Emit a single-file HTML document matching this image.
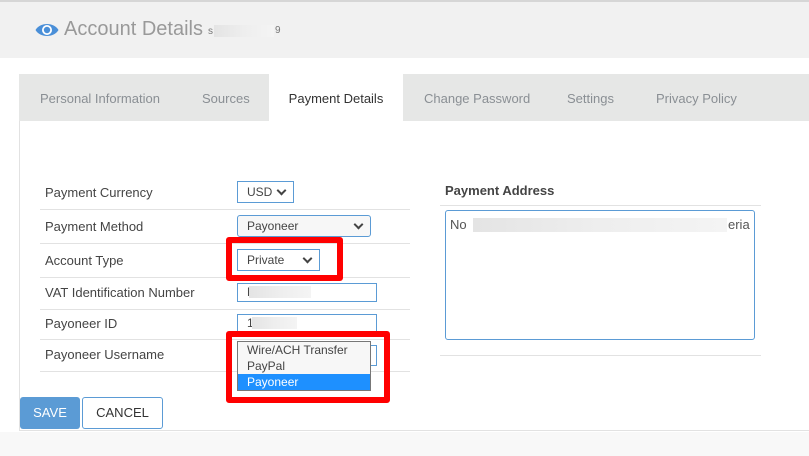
<!DOCTYPE html>
<html><head><meta charset="utf-8"><style>
*{margin:0;padding:0;box-sizing:border-box}
body{width:809px;height:456px;overflow:hidden;background:#fff;font-family:"Liberation Sans",sans-serif;position:relative;color:#333}
.a{position:absolute}
.hdr{left:0;top:0;width:809px;height:58px;background:#f1f1f1;border-top:2px solid #d6d6d6}
.tabs{left:19px;top:74px;width:790px;height:47px;background:#e6e7e6}
.tab{position:absolute;top:0;height:47px;line-height:50px;font-size:13px;color:#8a8f94}
.lbl{font-size:13px;color:#444;left:45px}
.ln{height:1px;background:#e2e2e2}
.sel{border:1px solid #5b9bd5;background:#fff;font-size:12px;color:#444;padding-left:9px;line-height:20px;height:22px}
.chev{position:absolute;right:8px;top:5px;width:7px;height:7px;border-right:2px solid #444;border-bottom:2px solid #444;transform:rotate(45deg)}
.blur{background:linear-gradient(90deg,#e4e4e4,#eee,#f4f4f4);}
.red{border:6px solid #f00;border-radius:3px}
</style></head><body>
<div class="a hdr"></div>
<svg class="a" style="left:35px;top:21px" width="24" height="18" viewBox="0 0 24 18"><path d="M0.5 9C5 1 19 1 23.5 9C19 17 5 17 0.5 9Z" fill="#4a8fd8"/><circle cx="12" cy="9" r="5" fill="#fff"/><circle cx="12" cy="9" r="3.2" fill="#4a8fd8"/></svg>
<div class="a" style="left:64px;top:18px;font-size:20px;color:#999">Account Details</div>
<div class="a" style="left:208px;top:26px;font-size:10px;color:#777">s</div>
<div class="a blur" style="left:214px;top:25px;width:60px;height:12px"></div>
<div class="a" style="left:275px;top:25px;font-size:10px;color:#777">9</div>

<div class="a tabs">
<div class="tab" style="left:21px">Personal Information</div>
<div class="tab" style="left:183px">Sources</div>
<div class="tab" style="left:250px;width:134px;background:#fff;color:#333;text-align:center">Payment Details</div>
<div class="tab" style="left:405px">Change Password</div>
<div class="tab" style="left:548px">Settings</div>
<div class="tab" style="left:637px">Privacy Policy</div>
</div>
<div class="a" style="left:19px;top:121px;width:1px;height:310px;background:#e2e2e2"></div>
<div class="a" style="left:19px;top:430px;width:790px;height:1px;background:#e2e2e2"></div>
<div class="a" style="left:0;top:432px;width:809px;height:24px;background:#f8f8f8"></div>

<div class="a lbl" style="top:185px">Payment Currency</div>
<div class="a lbl" style="top:219px">Payment Method</div>
<div class="a lbl" style="top:253px">Account Type</div>
<div class="a lbl" style="top:285px">VAT Identification Number</div>
<div class="a lbl" style="top:316px">Payoneer ID</div>
<div class="a lbl" style="top:347px">Payoneer Username</div>
<div class="a ln" style="left:40px;top:209px;width:370px"></div>
<div class="a ln" style="left:40px;top:243px;width:370px"></div>
<div class="a ln" style="left:40px;top:277px;width:370px"></div>
<div class="a ln" style="left:40px;top:309px;width:370px"></div>
<div class="a ln" style="left:40px;top:339px;width:370px"></div>
<div class="a ln" style="left:40px;top:371px;width:370px"></div>

<div class="a sel" style="left:237px;top:181px;width:57px">USD<span class="chev"></span></div>
<div class="a sel" style="left:237px;top:215px;width:134px;border-radius:3px;background:#f7f7f7">Payoneer<span class="chev"></span></div>
<div class="a sel" style="left:237px;top:249px;width:83px">Private<span class="chev"></span></div>
<div class="a sel" style="left:237px;top:283px;width:140px;height:19px;line-height:17px">N</div>
<div class="a blur" style="left:249px;top:286px;width:62px;height:12px"></div>
<div class="a sel" style="left:237px;top:314px;width:140px;height:19px;line-height:17px">1</div>
<div class="a blur" style="left:252px;top:317px;width:45px;height:12px"></div>
<div class="a sel" style="left:237px;top:345px;width:140px;height:21px"></div>

<div class="a red" style="left:226px;top:237px;width:117px;height:44px"></div>
<div class="a red" style="left:226px;top:331px;width:164px;height:72px"></div>
<div class="a" style="left:237px;top:341px;width:134px;height:50px;border:1px solid #777;background:#f7f7f7;font-size:12px;color:#444">
<div style="height:16px;line-height:16px;padding-left:9px">Wire/ACH Transfer</div>
<div style="height:16px;line-height:16px;padding-left:9px">PayPal</div>
<div style="height:16px;line-height:16px;padding-left:9px;background:#1e90ff;color:#fff">Payoneer</div>
</div>

<div class="a" style="left:445px;top:183px;font-size:13px;font-weight:bold;color:#444">Payment Address</div>
<div class="a ln" style="left:440px;top:205px;width:321px"></div>
<div class="a" style="left:445px;top:210px;width:310px;height:130px;border:1px solid #5b9bd5;border-radius:3px"></div>
<div class="a" style="left:450px;top:217px;font-size:13px;color:#555">No</div>
<div class="a blur" style="left:473px;top:218px;width:254px;height:14px"></div>
<div class="a" style="left:728px;top:217px;font-size:13px;color:#555">eria</div>
<div class="a ln" style="left:440px;top:355px;width:321px"></div>

<div class="a" style="left:20px;top:397px;width:60px;height:32px;background:#5b9bd5;border-radius:3px;color:#fff;font-size:13px;line-height:32px;text-align:center">SAVE</div>
<div class="a" style="left:82px;top:397px;width:81px;height:32px;border:1px solid #5b9bd5;border-radius:3px;color:#333;font-size:13px;line-height:30px;text-align:center">CANCEL</div>
</body></html>
